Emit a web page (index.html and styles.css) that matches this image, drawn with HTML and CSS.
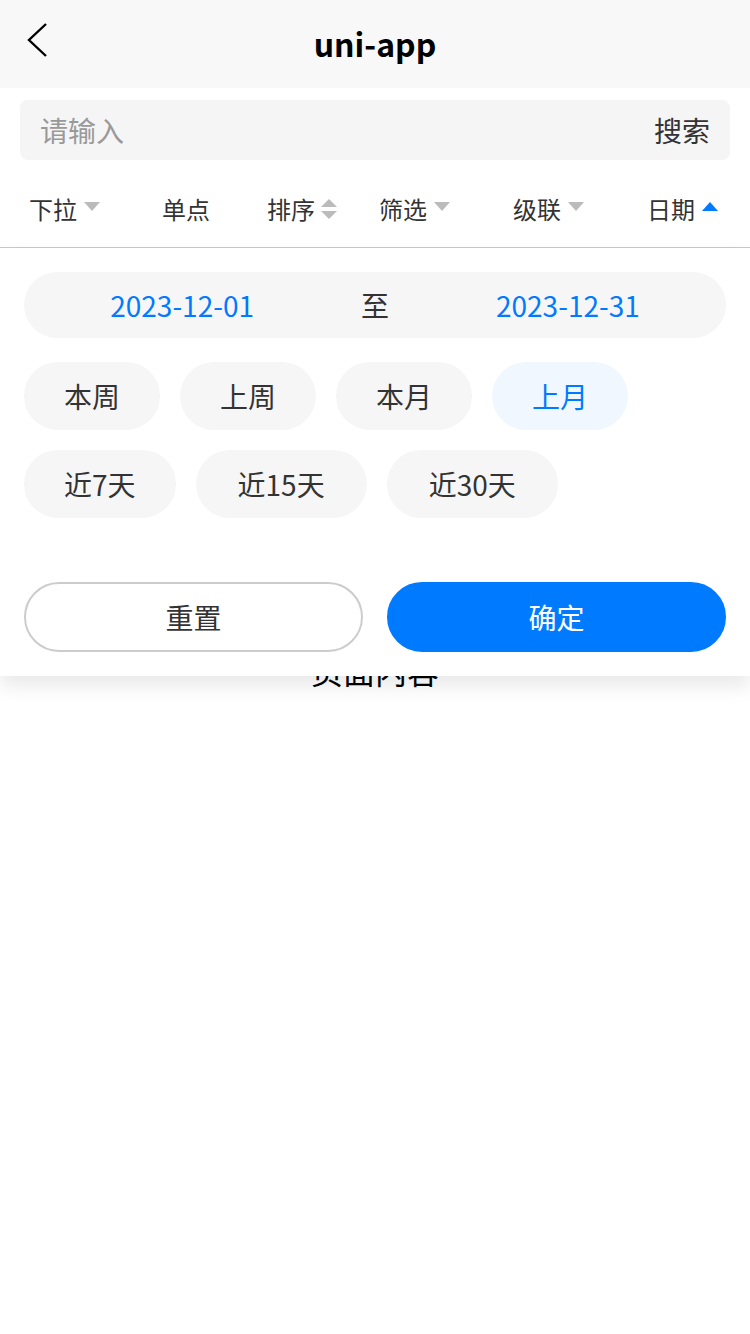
FILE: index.html
```html
<!DOCTYPE html>
<html lang="zh-CN">
<head>
<meta charset="utf-8">
<title>uni-app</title>
<link rel="stylesheet" href="styles.css">
</head>
<body>
<div class="page">
  <header class="navbar">
    <span class="back">
      <svg width="24" height="36" viewBox="0 0 24 36"><path d="M20 2 L3 18 L20 34" fill="none" stroke="#000" stroke-width="2.4"/></svg>
    </span>
    <h1 class="title">uni-app</h1>
  </header>

  <div class="search-wrap">
    <div class="search-box">
      <span class="placeholder">请输入</span>
      <span class="search-btn">搜索</span>
    </div>
  </div>

  <div class="filter-area">
    <nav class="filter-bar">
      <div class="f-item"><span>下拉</span><i class="tri down"></i></div>
      <div class="f-item"><span>单点</span></div>
      <div class="f-item"><span>排序</span><i class="sort"><i class="tri up sm"></i><i class="tri down sm"></i></i></div>
      <div class="f-item"><span>筛选</span><i class="tri down"></i></div>
      <div class="f-item"><span>级联</span><i class="tri down"></i></div>
      <div class="f-item"><span>日期</span><i class="tri up active"></i></div>
    </nav>

    <div class="content">页面内容</div>

    <div class="panel">
      <div class="range">
        <span class="date">2023-12-01</span>
        <span class="to">至</span>
        <span class="date">2023-12-31</span>
      </div>
      <div class="quick">
        <span class="chip">本周</span>
        <span class="chip">上周</span>
        <span class="chip">本月</span>
        <span class="chip on">上月</span>
      </div>
      <div class="quick">
        <span class="chip">近7天</span>
        <span class="chip num">近15天</span>
        <span class="chip num">近30天</span>
      </div>
      <div class="actions">
        <button class="btn reset">重置</button>
        <button class="btn ok">确定</button>
      </div>
    </div>
  </div>
</div>
</body>
</html>
```

FILE: styles.css
```css
* { box-sizing: border-box; }
html, body { margin: 0; padding: 0; background: #fff; }
body {
  font-family: "Noto Sans CJK SC", "Noto Sans", sans-serif;
  color: #333;
  width: 750px;
  height: 1334px;
  overflow: hidden;
}

.navbar {
  height: 88px;
  background: #f8f8f8;
  display: flex;
  align-items: center;
  justify-content: center;
  position: relative;
}
.back {
  position: absolute;
  left: 26px;
  top: 22px;
  display: flex;
}
.title {
  margin: 0 0 2px;
  font-size: 32px;
  font-weight: 700;
  color: #000;
  line-height: 1;
}

.search-wrap {
  padding: 12px 20px 0;
  background: #fff;
}
.search-box {
  height: 60px;
  border-radius: 8px;
  background: #f5f5f5;
  display: flex;
  align-items: center;
  justify-content: space-between;
  padding: 0 20px;
  font-size: 28px;
}
.placeholder { color: #999; }
.search-btn { color: #333; }

.filter-area { position: relative; }
.filter-bar {
  height: 88px;
  padding-top: 11px;
  border-bottom: 1px solid #c8c8c8;
  display: grid;
  grid-template-columns: 133px 105px 112px 134px 134px 1fr;
  padding-left: 29px;
  align-items: center;
  font-size: 24px;
  color: #333;
}
.f-item {
  display: flex;
  align-items: center;
  line-height: 1;
}
.tri {
  display: block;
  width: 0;
  height: 0;
  margin-left: 7px;
  border-left: 8px solid transparent;
  border-right: 8px solid transparent;
}
.tri.down { border-top: 9px solid #bbb; margin-top: -6px; }
.tri.up { border-bottom: 9px solid #bbb; margin-top: -6px; }
.tri.up.active { border-bottom-color: #007aff; }
.sort {
  display: flex;
  flex-direction: column;
  gap: 4px;
  margin-left: 6px;
}
.sort .tri { margin: 0; }
.tri.sm.up { border-bottom-width: 8px; }
.tri.sm.down { border-top-width: 8px; }

.content {
  padding-top: 406px;
  text-align: center;
  font-size: 32px;
  line-height: 32px;
  color: #000;
}

.panel {
  position: absolute;
  left: 0;
  right: 0;
  top: 88px;
  background: #fff;
  padding: 24px 24px 24px;
  box-shadow: 0 10px 18px rgba(0, 0, 0, 0.09);
}
.range {
  height: 66px;
  border-radius: 33px;
  background: #f6f6f6;
  display: flex;
  align-items: center;
  justify-content: center;
  gap: 107px;
  font-size: 28px;
}
.date { color: #007aff; }
.to { color: #333; }

.quick {
  display: flex;
  gap: 20px;
  margin-top: 24px;
}
.quick + .quick { margin-top: 20px; }
.chip {
  height: 68px;
  padding: 0 40px;
  border-radius: 34px;
  background: #f6f6f6;
  display: flex;
  align-items: center;
  font-size: 28px;
  color: #333;
}
.chip.num { padding: 0 42px; }
.chip.on {
  background: #f0f7ff;
  color: #007aff;
}

.actions {
  display: flex;
  gap: 24px;
  margin-top: 64px;
}
.btn {
  flex: 1;
  height: 70px;
  border-radius: 35px;
  font-family: inherit;
  font-size: 28px;
  padding: 0;
}
.btn.reset {
  background: #fff;
  border: 2px solid #ccc;
  color: #333;
}
.btn.ok {
  background: #007aff;
  border: 2px solid #007aff;
  color: #fff;
}
```
